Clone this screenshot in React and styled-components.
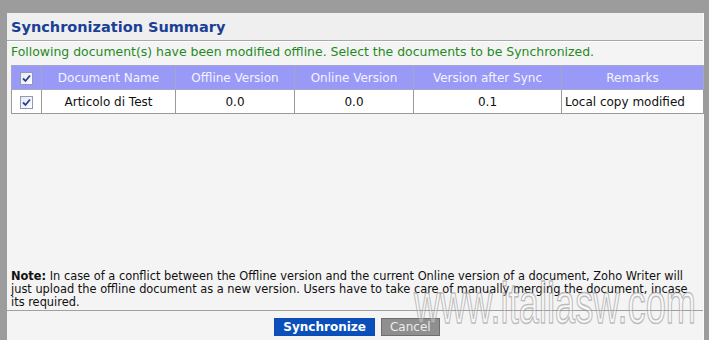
import React from "react";
import styled, { createGlobalStyle } from "styled-components";

const Global = createGlobalStyle`
  html, body { margin: 0; padding: 0; }
  body {
    background: #9c9c9c;
    font-family: "DejaVu Sans", Verdana, sans-serif;
    overflow: hidden;
  }
`;

const Frame = styled.div`
  height: 340px;
  padding: 13px 5px 0 7px;
  box-sizing: border-box;
  position: relative;
  overflow: hidden;
`;

const Dialog = styled.div`
  background: #f4f4f4;
  height: 100%;
  border-right: 1px solid #fafafa;
  display: flex;
  flex-direction: column;
`;

const TitleBar = styled.div`
  height: 27px;
  background: #efefef;
  border-bottom: 1px solid #a8a8a8;
  box-shadow: 0 1px 0 #ffffff;
  display: flex;
  align-items: center;
  padding-left: 4px;
`;

const Title = styled.h1`
  margin: 0;
  font-size: 14.5px;
  font-weight: bold;
  color: #1b3f96;
`;

const Body = styled.div`
  padding: 3px 0 0 4px;
  flex: 1;
  display: flex;
  flex-direction: column;
`;

const Intro = styled.p`
  margin: 0 0 5px;
  font-size: 12.45px;
  line-height: 16px;
  color: #1f8a1f;
`;

const Table = styled.table`
  width: 692px;
  border-collapse: collapse;
  font-size: 12px;
  table-layout: fixed;
`;

const Th = styled.th`
  background: #9999f8;
  color: #f4f4ff;
  font-weight: normal;
  height: 23px;
  padding: 0;
  border: 1px solid #a6a6c8;
  text-align: center;
`;

const Td = styled.td`
  background: #ffffff;
  color: #111;
  height: 23px;
  padding: 0 ${(p) => (p.$left ? "3px" : "0")};
  border: 1px solid #9a9a9a;
  text-align: ${(p) => (p.$left ? "left" : "center")};
`;

const Check = styled.span`
  display: inline-block;
  width: 11px;
  height: 11px;
  border: 1px solid #8e9ab8;
  background: linear-gradient(135deg, #e8e8f0, #ffffff);
  vertical-align: middle;
  position: relative;
  svg { position: absolute; left: 1px; top: 1px; }
`;

const Spacer = styled.div`
  flex: 1;
`;

const Note = styled.p`
  margin: 0 0 1px;
  width: 692px;
  font-size: 11.4px;
  line-height: 13px;
  color: #111;
  b { font-weight: bold; }
`;

const Footer = styled.div`
  border-top: 1px solid #a0a0a0;
  margin-left: -4px;
  height: 30px;
  display: flex;
  justify-content: center;
  gap: 6px;
  padding: 7px 0 0 4px;
  box-sizing: border-box;
`;

const Button = styled.button`
  height: 18px;
  padding: 0 8px;
  border: 1px solid ${(p) => (p.$primary ? "#0a4cb4" : "#6e6e6e")};
  background: ${(p) => (p.$primary ? "#0a4fba" : "#8f8f8f")};
  color: ${(p) => (p.$primary ? "#ffffff" : "#ededed")};
  font-family: "DejaVu Sans", Verdana, sans-serif;
  font-size: 12px;
  font-weight: ${(p) => (p.$primary ? "bold" : "normal")};
  line-height: 16px;
  cursor: pointer;
`;

const Watermark = styled.div`
  position: absolute;
  left: 414px;
  top: 274px;
  font-family: "Liberation Sans", Arial, sans-serif;
  font-size: 58px;
  line-height: 1;
  transform: scaleX(0.625);
  transform-origin: left top;
  color: rgba(255, 255, 255, 0.3);
  -webkit-text-stroke: 1.5px rgba(130, 130, 130, 0.5);
  pointer-events: none;
  white-space: nowrap;
`;

const CheckBox = () => (
  <Check>
    <svg width="9" height="9" viewBox="0 0 9 9">
      <path d="M1 4.5 L3.5 7 L8 1.5" fill="none" stroke="#2a3f9a" strokeWidth="1.8" />
    </svg>
  </Check>
);

export default function App() {
  return (
    <>
      <Global />
      <Frame>
        <Dialog>
          <TitleBar>
            <Title>Synchronization Summary</Title>
          </TitleBar>
          <Body>
            <Intro>
              Following document(s) have been modified offline. Select the documents to be Synchronized.
            </Intro>
            <Table>
              <colgroup>
                <col style={{ width: 30 }} />
                <col style={{ width: 134 }} />
                <col style={{ width: 119 }} />
                <col style={{ width: 119 }} />
                <col style={{ width: 148 }} />
                <col style={{ width: 142 }} />
              </colgroup>
              <thead>
                <tr>
                  <Th><CheckBox /></Th>
                  <Th>Document Name</Th>
                  <Th>Offline Version</Th>
                  <Th>Online Version</Th>
                  <Th>Version after Sync</Th>
                  <Th>Remarks</Th>
                </tr>
              </thead>
              <tbody>
                <tr>
                  <Td><CheckBox /></Td>
                  <Td>Articolo di Test</Td>
                  <Td>0.0</Td>
                  <Td>0.0</Td>
                  <Td>0.1</Td>
                  <Td $left>Local copy modified</Td>
                </tr>
              </tbody>
            </Table>
            <Spacer />
            <Note>
              <b>Note:</b> In case of a conflict between the Offline version and the current Online version of a document, Zoho Writer will just upload the offline document as a new version. Users have to take care of manually merging the document, incase its required.
            </Note>
            <Footer>
              <Button $primary>Synchronize</Button>
              <Button>Cancel</Button>
            </Footer>
          </Body>
        </Dialog>
        <Watermark>www.italiasw.com</Watermark>
      </Frame>
    </>
  );
}
